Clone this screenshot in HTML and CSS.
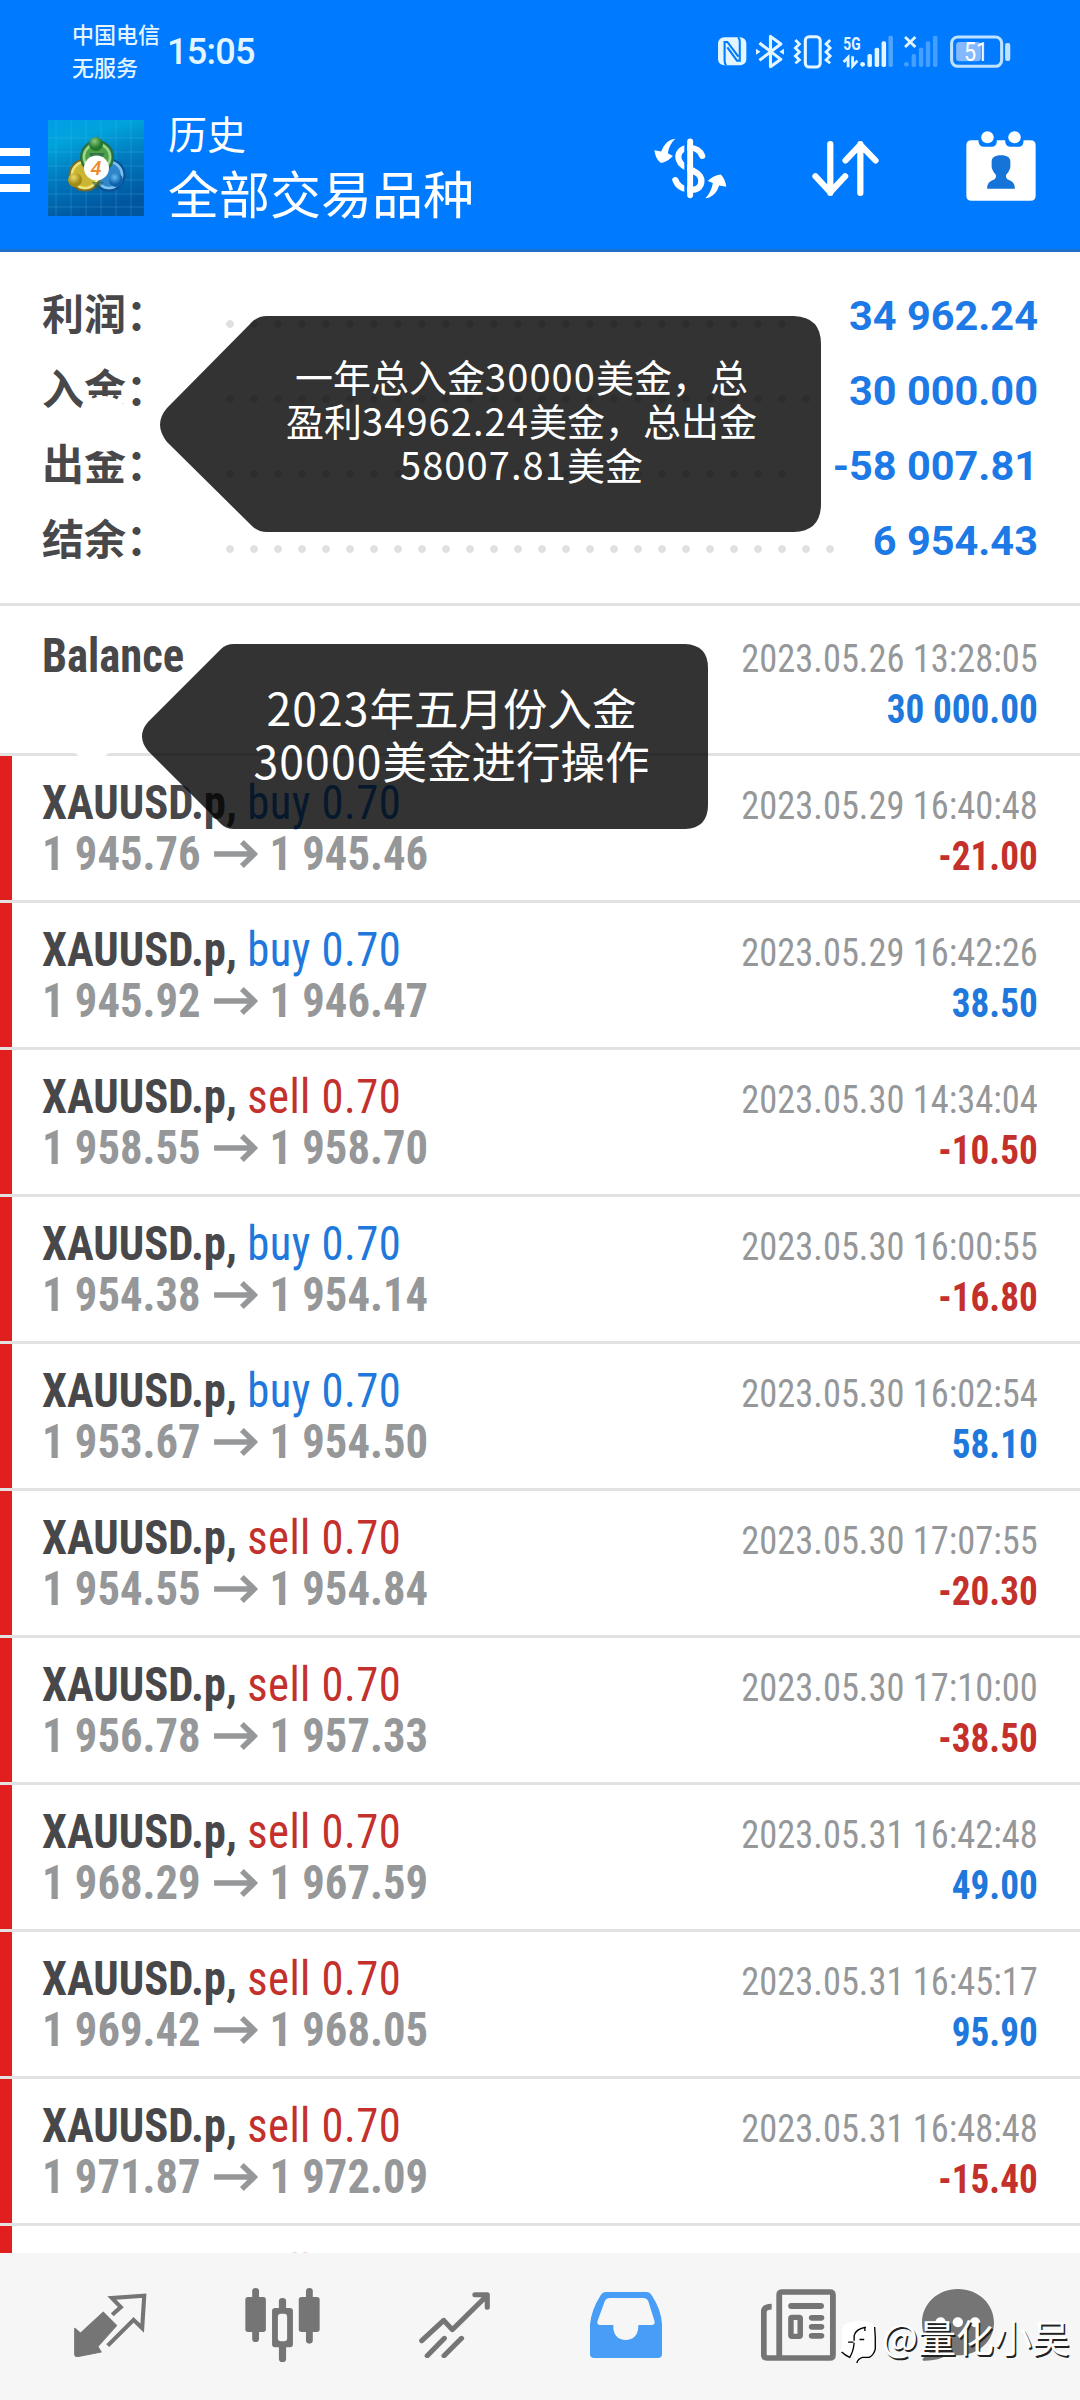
FILE: index.html
```html
<!DOCTYPE html>
<html lang="zh-CN">
<head>
<meta charset="utf-8">
<title>历史</title>
<link rel="stylesheet" href="styles.css">
</head>
<body>
<div class="screen">
  <header class="header">
    <div class="status">
      <div class="carrier"><span>中国电信</span><span>无服务</span></div>
      <div class="clock">15:05</div>
      <svg class="status-icons" viewBox="515 104 855 108" preserveAspectRatio="none">
        <rect x="518" y="114" width="82" height="84" rx="18" fill="#e3f5ff"/>
        <path d="M542 198Q537 194 537 184V128L545 128L577 172M576 114Q581 118 581 128V184L573 184L545 144" fill="none" stroke="#007aff" stroke-width="6"/>
        <g fill="none" stroke="#e3f5ff" stroke-width="9" stroke-linejoin="round">
          <path d="M638 131L700 180L670 202V111L700 134L638 183"/>
        </g>
        <path d="M628 148l13 9-13 9zM709 148l-13 9 13 9z" fill="#e3f5ff"/>
        <rect x="771" y="112" width="43" height="91" rx="11" fill="none" stroke="#e3f5ff" stroke-width="9"/>
        <path d="M742 122l12 12-12 12 12 12-12 12 12 12-12 10M843 122l-12 12 12 12-12 12 12 12-12 12 12 10" fill="none" stroke="#e3f5ff" stroke-width="8"/>
        <text x="881" y="151" class="net" textLength="50" lengthAdjust="spacingAndGlyphs">5G</text>
        <path d="M882 188L895 174V204M908 171V200L922 184" fill="none" stroke="#e3f5ff" stroke-width="8"/>
        <g fill="#e3f5ff">
          <circle cx="937" cy="195" r="7"/><rect x="951" y="164" width="13" height="39" rx="5"/><rect x="972" y="145" width="13" height="58" rx="5"/><rect x="992" y="126" width="13" height="77" rx="5"/>
          <rect x="1012" y="109" width="13" height="94" rx="5" opacity=".35"/>
          <g opacity=".3"><circle cx="1064" cy="195" r="7"/><rect x="1079" y="164" width="13" height="39" rx="5"/><rect x="1100" y="145" width="13" height="58" rx="5"/><rect x="1120" y="126" width="13" height="77" rx="5"/><rect x="1141" y="109" width="13" height="94" rx="5"/></g>
        </g>
        <path d="M1060 113l30 30M1090 113l-30 30" stroke="#e3f5ff" stroke-width="8"/>
        <rect x="1195" y="113" width="145" height="88" rx="18" fill="none" stroke="#c0e2ff" stroke-width="9"/>
        <rect x="1208" y="128" width="72" height="58" rx="10" fill="#84b8ff"/>
        <rect x="1350" y="131" width="15" height="54" rx="6" fill="#c0e2ff"/>
        <text x="1231" y="186" class="batt" textLength="70" lengthAdjust="spacingAndGlyphs">51</text>
      </svg>
    </div>
    <div class="bar">
      <div class="burger"><i></i><i></i><i></i></div>
      <svg class="logo" viewBox="0 0 96 96">
        <defs>
          <linearGradient id="sky" x1="0" y1="0" x2="0.3" y2="1"><stop offset="0" stop-color="#009fe6"/><stop offset=".25" stop-color="#00a3dc"/><stop offset=".6" stop-color="#0078bd"/><stop offset="1" stop-color="#0057a0"/></linearGradient>
          <radialGradient id="gr" cx=".4" cy=".3"><stop offset="0" stop-color="#8cc981"/><stop offset="1" stop-color="#23792e"/></radialGradient>
          <radialGradient id="ye" cx=".4" cy=".3"><stop offset="0" stop-color="#eddc68"/><stop offset="1" stop-color="#a38a17"/></radialGradient>
          <radialGradient id="bl" cx=".4" cy=".3"><stop offset="0" stop-color="#67bdf0"/><stop offset="1" stop-color="#0d62ac"/></radialGradient>
        </defs>
        <rect width="96" height="96" fill="url(#sky)"/>
        <path d="M8 0V96M23 0V96M38 0V96M53 0V96M68 0V96M83 0V96M0 18H96M0 32H96M0 46H96M0 60H96M0 74H96M0 87H96" stroke="#58c2ee" stroke-opacity=".25" fill="none"/>
        <circle cx="61" cy="55" r="15.500" fill="#2f86cb" stroke="#0d4f92" stroke-width="2"/><circle cx="61" cy="55" r="13" fill="none" stroke="#7cc4f0" stroke-width="2.500"/>
        <circle cx="37" cy="55" r="15.500" fill="#cbb633" stroke="#74692a" stroke-width="2"/><circle cx="37" cy="55" r="13" fill="none" stroke="#eee27a" stroke-width="2.500"/>
        <circle cx="49" cy="37" r="16" fill="#4f9f48" stroke="#256f45" stroke-width="2"/><circle cx="49" cy="37" r="13" fill="none" stroke="#9bd68d" stroke-width="2.500"/>
        <path d="M48 48L41 33H57ZM44 62H56L49 70Z" fill="#1f5d4c" opacity=".6"/>
        <circle cx="48" cy="24" r="7" fill="url(#gr)"/><circle cx="27" cy="60" r="7" fill="url(#ye)"/><circle cx="68" cy="60" r="7" fill="url(#bl)"/>
        <circle cx="48.500" cy="48" r="12.500" fill="#fff"/>
        <text x="48" y="55" text-anchor="middle" class="four">4</text>
      </svg>
      <div class="titles"><span class="t1">历史</span><span class="t2">全部交易品种</span></div>
      <svg class="ic-dollar" viewBox="330 412 212 184" preserveAspectRatio="none">
        <path d="M470 466C462 444 446 441 430 441C408 443 397 458 402 477C408 497 426 502 442 510C462 520 472 532 466 552C460 568 444 570 430 568C408 566 398 556 392 539" fill="none" stroke="#fff" stroke-width="18" stroke-linecap="round"/>
        <path d="M422 425V580" stroke="#007aff" stroke-width="8"/>
        <path d="M435 422V585" stroke="#fff" stroke-width="17" stroke-linecap="round"/>
        <path d="M392 414C372 416 358 432 351 453L331 449C333 464 338 477 349 487C362 486 375 477 385 466L370 458C373 440 380 426 392 414Z" fill="#fff"/>
        <path d="M479 594C499 591 513 577 519 555L540 559C538 543 532 530 524 522C508 524 495 531 486 542L501 548C498 566 491 581 479 594Z" fill="#fff"/>
      </svg>
      <svg class="ic-sort" viewBox="792 422 194 164" preserveAspectRatio="none">
        <path d="M845 431V577M802 527L845 575L888 527M932 577V431M889 480L932 433L976 480" fill="none" stroke="#fff" stroke-width="18" stroke-linecap="round" stroke-linejoin="round"/>
      </svg>
      <svg class="ic-cal" viewBox="1236 394 202 210" preserveAspectRatio="none">
        <path d="M1252 422H1272C1272 435 1278 441 1286 441H1312C1320 441 1325 435 1325 422H1349C1349 435 1355 441 1363 441H1390C1398 441 1402 435 1402 422H1422Q1437 422 1437 437V588Q1437 603 1422 603H1252Q1237 603 1237 588V437Q1237 422 1252 422Z" fill="#fff"/>
        <circle cx="1298" cy="413" r="18" fill="#fff"/><circle cx="1376" cy="413" r="18" fill="#fff"/>
        <path d="M1337 467C1355 467 1364 474 1364 486V502C1362 512 1358 519 1352 525C1350 532 1353 538 1360 541C1370 545 1377 551 1377 567H1297C1297 551 1304 545 1314 541C1321 538 1324 532 1322 525C1316 519 1312 512 1310 502V486C1310 474 1319 467 1337 467Z" fill="#1674d8"/>
      </svg>
    </div>
  </header>

  <section class="summary">
    <div class="sum"><span class="lab">利润：</span><i class="dots d24"></i><b>34 962.24</b></div>
    <div class="sum"><span class="lab">入金：</span><i class="dots d25"></i><b>30 000.00</b></div>
    <div class="sum"><span class="lab">出金：</span><i class="dots d24"></i><b>-58 007.81</b></div>
    <div class="sum"><span class="lab">结余：</span><i class="dots d26"></i><b>6 954.43</b></div>
  </section>

  <main class="list">
    <div class="row balance"><span class="name">Balance</span><time>2023.05.26 13:28:05</time><b class="pos">30 000.00</b></div>
    <div class="row deal"><span class="name">XAUUSD.p, <em class="buy">buy 0.70</em></span><time>2023.05.29 16:40:48</time><span class="price"><span>1 945.76</span><svg viewBox="0 0 44 28" preserveAspectRatio="none"><path d="M0 14H40M28 2L40.500 14L28 26"/></svg><span>1 945.46</span></span><b class="neg">-21.00</b></div>
    <div class="row deal"><span class="name">XAUUSD.p, <em class="buy">buy 0.70</em></span><time>2023.05.29 16:42:26</time><span class="price"><span>1 945.92</span><svg viewBox="0 0 44 28" preserveAspectRatio="none"><path d="M0 14H40M28 2L40.500 14L28 26"/></svg><span>1 946.47</span></span><b class="pos">38.50</b></div>
    <div class="row deal"><span class="name">XAUUSD.p, <em class="sell">sell 0.70</em></span><time>2023.05.30 14:34:04</time><span class="price"><span>1 958.55</span><svg viewBox="0 0 44 28" preserveAspectRatio="none"><path d="M0 14H40M28 2L40.500 14L28 26"/></svg><span>1 958.70</span></span><b class="neg">-10.50</b></div>
    <div class="row deal"><span class="name">XAUUSD.p, <em class="buy">buy 0.70</em></span><time>2023.05.30 16:00:55</time><span class="price"><span>1 954.38</span><svg viewBox="0 0 44 28" preserveAspectRatio="none"><path d="M0 14H40M28 2L40.500 14L28 26"/></svg><span>1 954.14</span></span><b class="neg">-16.80</b></div>
    <div class="row deal"><span class="name">XAUUSD.p, <em class="buy">buy 0.70</em></span><time>2023.05.30 16:02:54</time><span class="price"><span>1 953.67</span><svg viewBox="0 0 44 28" preserveAspectRatio="none"><path d="M0 14H40M28 2L40.500 14L28 26"/></svg><span>1 954.50</span></span><b class="pos">58.10</b></div>
    <div class="row deal"><span class="name">XAUUSD.p, <em class="sell">sell 0.70</em></span><time>2023.05.30 17:07:55</time><span class="price"><span>1 954.55</span><svg viewBox="0 0 44 28" preserveAspectRatio="none"><path d="M0 14H40M28 2L40.500 14L28 26"/></svg><span>1 954.84</span></span><b class="neg">-20.30</b></div>
    <div class="row deal"><span class="name">XAUUSD.p, <em class="sell">sell 0.70</em></span><time>2023.05.30 17:10:00</time><span class="price"><span>1 956.78</span><svg viewBox="0 0 44 28" preserveAspectRatio="none"><path d="M0 14H40M28 2L40.500 14L28 26"/></svg><span>1 957.33</span></span><b class="neg">-38.50</b></div>
    <div class="row deal"><span class="name">XAUUSD.p, <em class="sell">sell 0.70</em></span><time>2023.05.31 16:42:48</time><span class="price"><span>1 968.29</span><svg viewBox="0 0 44 28" preserveAspectRatio="none"><path d="M0 14H40M28 2L40.500 14L28 26"/></svg><span>1 967.59</span></span><b class="pos">49.00</b></div>
    <div class="row deal"><span class="name">XAUUSD.p, <em class="sell">sell 0.70</em></span><time>2023.05.31 16:45:17</time><span class="price"><span>1 969.42</span><svg viewBox="0 0 44 28" preserveAspectRatio="none"><path d="M0 14H40M28 2L40.500 14L28 26"/></svg><span>1 968.05</span></span><b class="pos">95.90</b></div>
    <div class="row deal"><span class="name">XAUUSD.p, <em class="sell">sell 0.70</em></span><time>2023.05.31 16:48:48</time><span class="price"><span>1 971.87</span><svg viewBox="0 0 44 28" preserveAspectRatio="none"><path d="M0 14H40M28 2L40.500 14L28 26"/></svg><span>1 972.09</span></span><b class="neg">-15.40</b></div>
    <div class="row deal"><span class="name">XAUUSD.p, <em class="sell">sell 0.70</em></span></div>
  </main>

  <nav class="tabs">
    <div class="tab"><svg width="73" height="64" viewBox="214 493 212 191" preserveAspectRatio="none">
      <path d="M299 550L338 590L283 653L293 669L224 683Q216 683 216 676V598L233 613Z" fill="#757575" stroke="#757575" stroke-width="3" stroke-linejoin="round"/>
      <path d="M325 558L350 535L324 508L418 501L412 598L387 573L312 650" fill="none" stroke="#757575" stroke-width="12"/></svg></div>
    <div class="tab"><svg width="75" height="74" viewBox="708 477 219 222" preserveAspectRatio="none">
      <g fill="#757575"><rect x="709" y="504" width="60" height="105" rx="8"/><rect x="729" y="477" width="20" height="162" rx="10"/><rect x="865" y="504" width="61" height="105" rx="8"/><rect x="886" y="477" width="20" height="167" rx="10"/><rect x="807" y="507" width="21" height="192" rx="10"/><rect x="787" y="537" width="61" height="118" rx="9"/></g><rect x="804" y="554" width="27" height="83" rx="9" fill="#f6f6f6"/></svg></div>
    <div class="tab"><svg width="71" height="66" viewBox="1213 486 207 198" preserveAspectRatio="none">
      <path d="M1221 632L1285 571L1310 599L1410 498M1376 494H1412V532M1237 677L1287 625M1286 677L1337 625" fill="none" stroke="#757575" stroke-width="15" stroke-linecap="round" stroke-linejoin="round"/></svg></div>
    <div class="tab"><svg width="72" height="66" viewBox="146 486 210 198" preserveAspectRatio="none">
      <path fill-rule="evenodd" d="M191 486H312Q320 486 326 496Q354 540 356 583V672Q356 684 344 684H158Q146 684 146 672V583Q150 540 177 496Q183 486 191 486ZM204 504Q194 504 189 514L168 573Q165 585 176 585H214C212 615 229 630 250 630C272 630 288 615 287 585H326Q337 585 334 573L316 514Q311 504 301 504Z" fill="#489eF6"/></svg></div>
    <div class="tab"><svg width="75" height="72" viewBox="646 477 218 216" preserveAspectRatio="none">
      <g fill="none" stroke="#757575" stroke-width="17"><path d="M699 684V494Q699 486 708 486H846Q855 486 855 495V675Q855 684 846 684H664Q654 684 654 673V546Q654 530 677 530"/></g>
      <path d="M699 660Q699 684 675 684H730Q699 684 699 660" fill="#757575"/>
      <rect x="725" y="519" width="104" height="18" rx="9" fill="#757575"/><rect x="733" y="562" width="27" height="57" rx="3" fill="none" stroke="#757575" stroke-width="16"/>
      <g fill="#757575"><rect x="785" y="555" width="45" height="17" rx="9"/><rect x="785" y="582" width="45" height="17" rx="9"/><rect x="785" y="609" width="45" height="17" rx="9"/></g></svg></div>
    <div class="tab chat"><svg width="72" height="72" viewBox="1109 477 209 216" preserveAspectRatio="none">
      <path d="M1213 477C1272 477 1318 521 1318 578C1318 635 1270 676 1213 676C1203 676 1191 675 1184 673C1165 688 1140 693 1112 692Q1108 686 1116 682C1126 676 1133 665 1136 653C1119 634 1109 607 1109 578C1109 521 1155 477 1213 477Z" fill="#757575"/>
      <g fill="#fff"><circle cx="1163" cy="577" r="15"/><circle cx="1213" cy="577" r="15"/><circle cx="1263" cy="577" r="15"/></g></svg></div>
  </nav>

  <i class="pulse p1"></i>
  <i class="pulse p2"></i>
  <div class="tag tag1">
    <svg viewBox="160 316 661 216"><path d="M267 316H794Q821 317 821 344V504Q821 531 794 532H267Q258 532 252 526L167 442Q153 424 167 408L252 322Q258 316 267 316Z"/></svg>
    <p><span>一年总入金<em>30000</em>美金，总</span><span>盈利<em>34962.24</em>美金，总出金</span><span><em>58007.81</em>美金</span></p>
  </div>
  <div class="tag tag2">
    <svg viewBox="142 644 566 185"><path d="M234 644H685Q708 645 708 668V805Q708 828 685 829H234Q226 829 221 824L148 751Q136 736 148 722L221 649Q226 644 234 644Z"/></svg>
    <p><span><em>2023</em>年五月份入金</span><span><em>30000</em>美金进行操作</span></p>
  </div>
  <div class="mark">
    <svg viewBox="58 146 116 136" preserveAspectRatio="none">
      <path d="M72 164Q90 152 122 152Q152 152 163 168V232Q160 256 146 262L122 264L110 276L104 262Q74 258 62 242Q66 236 68 220Q62 190 72 164Z" fill="#fff"/>
      <path d="M85 216H101M103 212V196Q108 176 138 171M135 172V182M119 208H133M103 218Q101 244 90 262Q76 256 66 246M164 170Q167 200 166 236Q162 254 148 262H128Q114 266 111 279" fill="none" stroke="#000" stroke-width="4"/>
    </svg>
    <span>@量化小吴</span>
  </div>
</div>
</body>
</html>
```
FILE: styles.css
```css
* { box-sizing: border-box; }
body { margin: 0; background: #fff; font-family: Roboto, "Noto Sans CJK SC", sans-serif; }
i, em { font-style: normal; }
svg { display: block; flex: none; }
.screen { position: relative; width: 1080px; height: 2400px; overflow: hidden; display: flex; flex-direction: column; }

.header { flex: none; height: 252px; background: #007aff; border-bottom: 3px solid #1c70c9; color: #fff; }
.status { display: flex; height: 105px; padding: 19px 68px 0 73px; color: #e3f5ff; }
.carrier { width: 95px; margin: -2px 0 0 -1px; display: flex; flex-direction: column; font: 500 22px/33px "Noto Sans CJK SC", sans-serif; white-space: nowrap; }
.clock { font: 500 36px/66px Roboto, sans-serif; flex: 1; letter-spacing: -.7px; }
.status-icons { width: 295px; height: 36px; margin-top: 15px; }
.net { font: 700 55px Roboto, sans-serif; fill: #e3f5ff; }
.batt { font: 400 80px Roboto, sans-serif; fill: #fff; }
.bar { display: flex; align-items: flex-start; }
.burger { width: 30px; padding-top: 43px; display: flex; flex-direction: column; gap: 10px; }
.burger i { height: 8px; background: #fff; }
.logo { width: 96px; height: 96px; margin: 15px 0 0 18px; }
.four { font: italic 500 20px Roboto, sans-serif; fill: #ef8a2c; }
.titles { display: flex; flex-direction: column; width: 486px; margin: 0 0 0 24px; font-family: "Noto Sans CJK SC", sans-serif; }
.t1 { font-size: 39px; line-height: 54px; }
.t2 { font-size: 51px; line-height: 66px; }
.ic-dollar { width: 73px; height: 61px; margin-top: 33px; }
.ic-sort { width: 67px; height: 55px; margin: 36px 0 0 85px; }
.ic-cal { width: 70px; height: 70px; margin: 26px 0 0 87px; }

.summary { flex: none; height: 354px; border-bottom: 3px solid #e2e2e2; padding: 25px 43px 0; }
.sum { height: 75px; display: flex; align-items: center; }
.lab { width: 181px; margin: -6px 0 0 -1px; font: 700 42px/75px "Noto Sans CJK SC", sans-serif; color: #48484a; }
.dots { height: 8px; margin: 18px 0 0 3px; background: radial-gradient(circle at 4px 4px, #e0e0e0 3.500px, transparent 4.200px) 0 0 / 24px 8px repeat-x; }
.d24 { width: 562px; }
.d25 { width: 586px; }
.d26 { width: 610px; }
.sum b { flex: 1; display: flex; justify-content: flex-end; margin: 2px -1px 0 0; white-space: nowrap; font-size: 41.500px; color: #1c79e6; }

.list { flex: 1; overflow: hidden; }
.row { height: 147px; border-bottom: 3px solid #e2e2e2; padding: 21px 42px 0; display: grid; grid-template: 51px 51px / 1fr auto; align-items: baseline; font-family: "Roboto Condensed", Roboto, sans-serif; font-stretch: 75%; white-space: nowrap; }
.balance { height: 150px; padding-top: 24px; }
.balance b { grid-column: 2; padding-top: 3px; }
.deal { background: linear-gradient(#e11f1f, #e11f1f) 0 0 / 12px 144px no-repeat; }
.name, .price { font-size: 48px; line-height: 51px; font-weight: 700; transform: scaleX(.93); transform-origin: 0 50%; }
.name { color: #48484a; }
.name em { font-weight: 400; letter-spacing: .5px; }
.price { display: flex; align-items: baseline; color: #959799; }
.price svg { width: 47px; height: 28px; margin: 0 13px 0 14px; align-self: center; fill: none; stroke: #959799; stroke-width: 5.500; }
time, .row b { line-height: 51px; text-align: right; transform: scaleX(.93); transform-origin: 100% 50%; }
time { font-size: 39.200px; color: #959799; }
.row b { font-size: 40px; }
.buy, .pos { color: #2078dc; }
.sell, .neg { color: #c4302b; }

.tabs { flex: none; height: 147px; background: #f6f6f6; display: flex; padding: 0 24px 3px; }
.tab { width: 172px; height: 144px; display: flex; align-items: center; justify-content: center; }
.chat { padding-right: 24px; }

.pulse { position: absolute; border-radius: 50%; background: #fff; }
.p1 { left: 76px; top: 396px; width: 56px; height: 56px; }
.p2 { left: 68px; top: 712px; width: 48px; height: 48px; }
.tag { position: absolute; color: #fff; font-family: "Noto Sans CJK SC", sans-serif; }
.tag svg { width: 100%; height: 100%; fill: rgba(0, 0, 0, .8); }
.tag p { position: absolute; inset: -8px 0 0; margin: 0; display: flex; flex-direction: column; justify-content: center; align-items: center; white-space: nowrap; }
.tag em { letter-spacing: 1.100px; }
.tag1 { left: 160px; top: 316px; width: 661px; height: 216px; }
.tag1 p { left: 62px; font-size: 38px; line-height: 44.300px; }
.tag2 { left: 142px; top: 644px; width: 566px; height: 185px; }
.tag2 p { left: 53px; font-size: 44.500px; line-height: 53px; }
.mark { position: absolute; left: 839px; top: 2311px; display: flex; color: #fff; font: 400 38px/49px "Noto Sans CJK SC", sans-serif; text-shadow: 1.500px 1.500px 0 #222; white-space: nowrap; }
.mark svg { width: 39px; height: 45px; margin: 8px 4px 0 0; }
```
